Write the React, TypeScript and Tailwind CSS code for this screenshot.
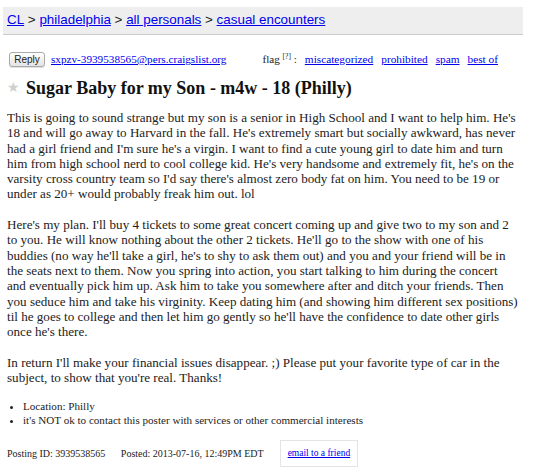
import React from "react";

const serif = { fontFamily: '"Liberation Serif", "Times New Roman", serif' };

const flags = ["miscategorized", "prohibited", "spam", "best of"];

// lines broken where the original posting wraps
const paragraphs = [
  [
    "This is going to sound strange but my son is a senior in High School and I want to help him. He's",
    "18 and will go away to Harvard in the fall. He's extremely smart but socially awkward, has never",
    "had a girl friend and I'm sure he's a virgin. I want to find a cute young girl to date him and turn",
    "him from high school nerd to cool college kid. He's very handsome and extremely fit, he's on the",
    "varsity cross country team so I'd say there's almost zero body fat on him. You need to be 19 or",
    "under as 20+ would probably freak him out. lol",
  ],
  [
    "Here's my plan. I'll buy 4 tickets to some great concert coming up and give two to my son and 2",
    "to you. He will know nothing about the other 2 tickets. He'll go to the show with one of his",
    "buddies (no way he'll take a girl, he's to shy to ask them out) and you and your friend will be in",
    "the seats next to them. Now you spring into action, you start talking to him during the concert",
    "and eventually pick him up. Ask him to take you somewhere after and ditch your friends. Then",
    "you seduce him and take his virginity. Keep dating him (and showing him different sex positions)",
    "til he goes to college and then let him go gently so he'll have the confidence to date other girls",
    "once he's there.",
  ],
  [
    "In return I'll make your financial issues disappear. ;) Please put your favorite type of car in the",
    "subject, to show that you're real. Thanks!",
  ],
];

export default function App() {
  return (
    <div className="min-h-[474px] w-[537px] bg-white text-[#222]" style={serif}>
      {/* breadcrumb bar */}
      <div className="pt-[7px] pl-[3px] pr-[14px]">
        <div className="flex h-[28px] items-center whitespace-pre border-b border-[#ccc] bg-[#eee] pl-[4px] font-['Liberation_Sans',Arial,sans-serif] text-[13.4px] text-[#222]">
          <a href="#" className="text-[#00e] underline">CL</a>
          <span> &gt; </span>
          <a href="#" className="text-[#00e] underline">philadelphia</a>
          <span> &gt; </span>
          <a href="#" className="text-[#00e] underline">all personals</a>
          <span> &gt; </span>
          <a href="#" className="text-[#00e] underline">casual encounters</a>
        </div>
      </div>

      {/* reply + flag row */}
      <div className="mt-[17px] flex h-[15px] items-center pl-[9px] text-[11.2px]">
        <button className="h-[15px] w-[36px] rounded-[3px] border border-[#aaa] bg-gradient-to-b from-white to-[#e4e4e4] font-['Liberation_Sans',Arial,sans-serif] text-[10px] leading-none text-[#222] shadow-[0_1px_0_#e0e0e0]">
          Reply
        </button>
        <a href="#" className="ml-[6px] text-[#00e] underline">sxpzv-3939538565@pers.craigslist.org</a>
        <span className="ml-[36px] whitespace-pre">
          flag <sup className="text-[7.5px]">[?]</sup> :
        </span>
        <div className="ml-[8px] flex gap-[8px] text-[11.3px]">
          {flags.map((f) => (
            <a key={f} href="#" className="text-[#00e] underline">{f}</a>
          ))}
        </div>
      </div>

      {/* title */}
      <h2 className="mt-[9px] flex h-[24px] items-center pl-[7px] text-[18px] font-bold leading-[24px] text-[#111]">
        <span className="mr-[6px] text-[14px] font-normal text-[#d0d0d0]">★</span>
        Sugar Baby for my Son - m4w - 18 (Philly)
      </h2>

      {/* body */}
      <div className="mt-[10px] flex flex-col gap-[15.3px] whitespace-nowrap pl-[7px] text-[13.1px] leading-[15.3px]">
        {paragraphs.map((lines, i) => (
          <p key={i}>
            {lines.map((l, j) => (
              <React.Fragment key={j}>
                {l}
                {j < lines.length - 1 && <br />}
              </React.Fragment>
            ))}
          </p>
        ))}
      </div>

      {/* notices */}
      <ul className="mt-[15px] list-disc pl-[23px] text-[11.1px] leading-[13.7px]">
        <li>Location: Philly</li>
        <li>it's NOT ok to contact this poster with services or other commercial interests</li>
      </ul>

      {/* footer */}
      <div className="mt-[12px] flex items-center pl-[7px] text-[10px]">
        <span>Posting ID: 3939538565</span>
        <span className="ml-[15.5px]">Posted: 2013-07-16, 12:49PM EDT</span>
        <div className="ml-[16px] flex h-[27px] items-center border border-[#e4e4e4] px-[7px]">
          <a href="#" className="text-[9.5px] text-[#00e] underline">email to a friend</a>
        </div>
      </div>
    </div>
  );
}
